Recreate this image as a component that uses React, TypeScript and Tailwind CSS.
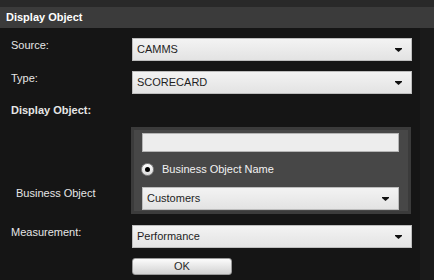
import React from "react";

function Arrow() {
  return (
    <svg width="7" height="4" viewBox="0 0 7 4" className="shrink-0">
      <path d="M0 0H7V1L3.5 4L0 1Z" fill="#111" />
    </svg>
  );
}

function Select({ value, className = "" }: { value: string; className?: string }) {
  return (
    <div
      className={`h-[23px] flex items-center justify-between pl-[4px] pr-[9px] border border-[#bdbdbd] bg-gradient-to-b from-[#f3f3f3] to-[#e3e3e3] text-[#1e1e1e] ${className}`}
    >
      <span>{value}</span>
      <Arrow />
    </div>
  );
}

function Row({ label, children }: { label: string; children: React.ReactNode }) {
  return (
    <div className="flex items-start">
      <div className="w-[132px] pl-[11px] pt-[1px] text-[#e6e6e6]">{label}</div>
      {children}
    </div>
  );
}

export default function App() {
  return (
    <div className="w-[434px] h-[280px] overflow-hidden bg-[#151515] font-['Liberation_Sans',Arial,sans-serif] text-[11px] leading-[13px]">
      <div className="h-[7px] bg-[#292929]" />
      <div className="h-[21px] bg-[#3b3b3b] flex items-center pl-[6px] font-bold text-white">
        Display Object
      </div>

      <div className="flex">
        <div className="w-[420px] pt-[10px] flex flex-col">
          <Row label="Source:">
            <Select value="CAMMS" className="w-[280px]" />
          </Row>

          <div className="mt-[10px]">
            <Row label="Type:">
              <Select value="SCORECARD" className="w-[280px]" />
            </Row>
          </div>

          <div className="mt-[10px] pl-[11px] font-bold text-[#e6e6e6]">Display Object:</div>

          {/* Business object panel */}
          <div className="mt-[10px] flex items-end">
            <div className="w-[131px] pl-[16px] pb-[14px] text-[#e6e6e6]">Business Object</div>
            <div className="w-[280px] h-[87px] border-[3px] border-[#3b3b3b] bg-[#474747] pl-[8px] pt-[3px]">
              <div className="w-[257px] h-[19px] bg-[#ededed] border border-[#b5b5b5]" />
              <div className="mt-[11px] h-[13px] flex items-center -ml-[1px] gap-[8px]">
                <div className="w-[13px] h-[13px] rounded-full bg-gradient-to-b from-[#ffffff] to-[#dcdcdc] border border-[#8a8a8a] flex items-center justify-center">
                  <div className="w-[5px] h-[5px] rounded-full bg-black" />
                </div>
                <span className="text-[#f2f2f2]">Business Object Name</span>
              </div>
              <Select value="Customers" className="mt-[11px] w-[257px]" />
            </div>
          </div>

          <div className="mt-[11px]">
            <Row label="Measurement:">
              <Select value="Performance" className="w-[280px]" />
            </Row>
          </div>

          <div className="mt-[10px] pl-[132px]">
            <button className="w-[100px] h-[17px] rounded-[3px] border border-[#9a9a9a] bg-gradient-to-b from-[#fcfcfc] to-[#d2d2d2] text-[#2a2a2a] text-[11px] leading-[15px]">
              OK
            </button>
          </div>
        </div>
        <div className="flex-1 h-[260px] bg-[#1a1a1a]" />
      </div>
    </div>
  );
}
